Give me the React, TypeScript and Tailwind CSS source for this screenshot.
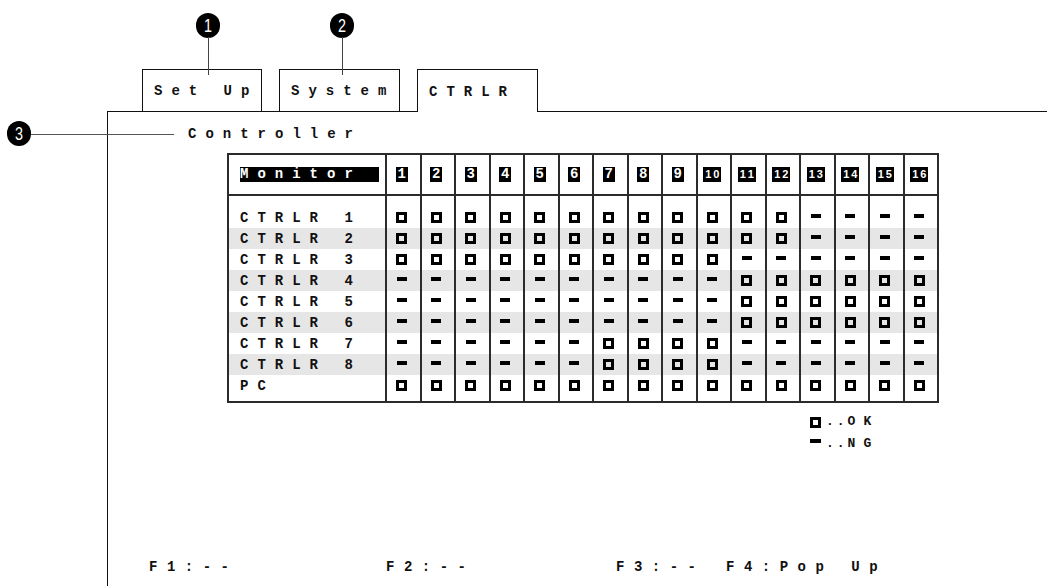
const rows: [string, string][] = [
  ["CTRLR 1", "1111111111110000"],
  ["CTRLR 2", "1111111111110000"],
  ["CTRLR 3", "1111111111000000"],
  ["CTRLR 4", "0000000000111111"],
  ["CTRLR 5", "0000000000111111"],
  ["CTRLR 6", "0000000000111111"],
  ["CTRLR 7", "0000001111000000"],
  ["CTRLR 8", "0000001111000000"],
  ["PC", "1111111111111111"],
];

const cols = Array.from({ length: 16 }, (_, i) => i + 1);

function Tab({ label, active }: { label: string; active?: boolean }) {
  return (
    <div
      className={
        "flex items-center pl-[11px] pt-[2px] border border-b-0 border-[#111] " +
        (active ? "w-[121px] h-[43px] -mb-px bg-white relative z-10" : "h-[42px]")
      }
    >
      {label}
    </div>
  );
}

function Ok() {
  return <span className="block w-[11px] h-[11px] border-[3px] border-black" />;
}

function Ng() {
  return <span className="block w-[10px] h-[4px] bg-black mb-[3px]" />;
}

function ColNum({ n }: { n: number }) {
  if (n < 10) {
    return (
      <span className="bg-black text-white leading-[15px] px-[2px] tracking-normal">{n}</span>
    );
  }
  const s = String(n);
  return (
    <span className="flex gap-[2px] bg-black text-white h-[15px] items-center px-[2px] tracking-normal font-['Liberation_Sans',sans-serif] text-[11px]">
      <span>{s[0]}</span>
      <span>{s[1]}</span>
    </span>
  );
}

function Spacer({ h }: { h: string }) {
  return (
    <div className={"grid grid-cols-[156px_repeat(16,minmax(0,1fr))] " + h}>
      <div />
      {cols.map((c) => (
        <div key={c} className="border-l-2 border-[#2b2b2b]" />
      ))}
    </div>
  );
}

function Circle({ n, className }: { n: number; className: string }) {
  return (
    <div
      className={
        "absolute w-[24px] h-[25px] rounded-full bg-black text-white flex items-center justify-center font-['Liberation_Sans',sans-serif] font-normal text-[18px] tracking-normal leading-none " +
        className
      }
    >
      <span className="inline-block scale-x-[0.8]">{n}</span>
    </div>
  );
}

export default function App() {
  return (
    <div className="relative w-[1047px] h-[586px] overflow-hidden bg-white text-[#111] font-['Liberation_Mono',monospace] font-bold text-[14px] tracking-[9px]">
      <div className="flex items-end h-[111px] pl-[142px] gap-[17px]">
        <div className="w-[120px]">
          <Tab label="Set Up" />
        </div>
        <div className="w-[121px]">
          <Tab label="System" />
        </div>
        <Tab label="CTRLR" active />
      </div>

      <div className="ml-[107px] h-[475px] border-l border-t border-[#111] flex flex-col">
        <div className="pl-[80px] pt-[12px] leading-[20px]">Controller</div>

        <div className="ml-[119px] mt-[9px] w-[712px] border-2 border-[#2b2b2b]">
          <div className="grid grid-cols-[156px_repeat(16,minmax(0,1fr))] h-[41px] border-b-2 border-[#2b2b2b]">
            <div className="flex items-center pl-[11px]">
              <span className="bg-black text-white leading-[15px]">Monitor&nbsp;</span>
            </div>
            {cols.map((c) => (
              <div key={c} className="border-l-2 border-[#2b2b2b] flex items-center justify-center pr-[3px]">
                <ColNum n={c} />
              </div>
            ))}
          </div>
          <Spacer h="h-[11px]" />
          {rows.map(([label, cells], i) => (
            <div
              key={label}
              className={
                "grid grid-cols-[156px_repeat(16,minmax(0,1fr))] h-[21px] " +
                (i % 2 === 1 ? "bg-[#e6e6e6]" : "")
              }
            >
              <div className="flex items-center pl-[11px] leading-none">{label}</div>
              {cells.split("").map((v, j) => (
                <div key={j} className="border-l-2 border-[#2b2b2b] flex items-center justify-center pr-[3px]">
                  {v === "1" ? <Ok /> : <Ng />}
                </div>
              ))}
            </div>
          ))}
          <Spacer h="h-[5px]" />
        </div>

        <div className="ml-[702px] mt-[8px] flex flex-col text-[13px]">
          <div className="flex items-center h-[22px]">
            <Ok />
            <span className="ml-[5px] tracking-[3px]">..</span>
            <span className="tracking-[8px]">OK</span>
          </div>
          <div className="flex items-center h-[22px]">
            <span className="block w-[11px] h-[4px] bg-black mb-[6px]" />
            <span className="ml-[5px] tracking-[3px]">..</span>
            <span className="tracking-[8px]">NG</span>
          </div>
        </div>

        <div className="flex-1" />

        <div className="flex pl-[41px] pb-[9px] leading-[20px] tracking-[9.5px]">
          <div className="w-[237px]">F1:--</div>
          <div className="w-[230px]">F2:--</div>
          <div className="w-[110px]">F3:--</div>
          <div>F4:Pop Up</div>
        </div>
      </div>

      <Circle n={1} className="left-[196px] top-[13px]" />
      <div className="absolute left-[208px] top-[37px] w-px h-[38px] bg-[#444]" />
      <Circle n={2} className="left-[330px] top-[13px]" />
      <div className="absolute left-[342px] top-[37px] w-px h-[38px] bg-[#444]" />
      <Circle n={3} className="left-[7px] top-[121px]" />
      <div className="absolute left-[31px] top-[134px] w-[143px] h-px bg-[#555]" />
    </div>
  );
}
